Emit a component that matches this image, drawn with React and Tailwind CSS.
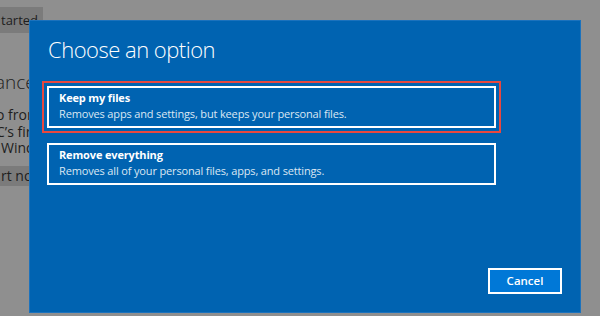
import React from "react";

const font = { fontFamily: "'Segoe UI', 'Open Sans', 'Noto Sans', sans-serif" };

const Option = ({ title, desc }) => {
    return (
        <div className="w-[449px] h-[42px] border-2 border-white pl-[10px] pt-[2px] tracking-[-0.15px]">
            <div className="text-[11px] leading-[16px] font-bold text-white">{title}</div>
            <div className="text-[11px] leading-[16px] text-[#dbe7f3]">{desc}</div>
        </div>
    );
};

const App = () => {
    return (
        <div className="relative w-[600px] h-[316px] bg-[#8f8f8f] overflow-hidden" style={font}>
            {/* page behind the dialog */}
            <div className="flex flex-col items-start pt-[7px] text-[#1e1e1e] whitespace-nowrap">
                <div className="h-[26px] w-[43px] bg-[#7b7b7b] text-[13px] leading-[26px] pl-[1px]">tarted</div>
                <div className="mt-[35px] text-[19px] leading-[28px] -ml-[5px] font-light">ance</div>
                <div className="mt-[11px] text-[14px] leading-[16.5px]">
                    <div className="-ml-[4px]">o from a device</div>
                    <div className="-ml-[4px]">C’s firmware</div>
                    <div className="ml-[1px]">Windows</div>
                </div>
                <div className="mt-[9px] h-[20px] w-[120px] bg-[#7b7b7b] text-[14px] leading-[20px] pl-[1px]">rt now</div>
            </div>

            {/* dialog */}
            <div className="absolute left-[29px] top-[20px] w-[552px] h-[293px] bg-[#0063b1] border border-[#1b72bd] flex flex-col">
                <div className="pl-[18px] pt-[13px] text-[22px] leading-[30px] font-light tracking-[-0.5px] text-white">Choose an option</div>

                <div className="mt-[17px] ml-[12px] w-fit border-2 border-[#e8483f] p-[3px]">
                    <Option title="Keep my files" desc="Removes apps and settings, but keeps your personal files." />
                </div>
                <div className="mt-[10px] ml-[17px]">
                    <Option title="Remove everything" desc="Removes all of your personal files, apps, and settings." />
                </div>

                <div className="mt-auto flex justify-end pr-[18px] pb-[18px]">
                    <button className="w-[74px] h-[26px] bg-[#0078d7] border-2 border-white text-white text-[11.5px] font-semibold leading-none">
                        Cancel
                    </button>
                </div>
            </div>
        </div>
    );
};

export default App;
